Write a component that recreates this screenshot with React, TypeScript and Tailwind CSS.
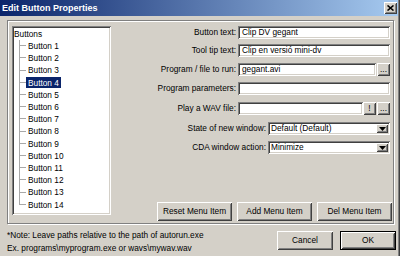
import React from "react";

const sunken =
  "bg-white p-[2px] shadow-[inset_1px_1px_0_#808080,inset_-1px_-1px_0_#ffffff,inset_2px_2px_0_#404040,inset_-2px_-2px_0_#d4d0c8]";
const raised =
  "bg-[#d4d0c8] shadow-[inset_1px_1px_0_#ffffff,inset_-1px_-1px_0_#404040,inset_2px_2px_0_#d4d0c8,inset_-2px_-2px_0_#808080]";

const items = Array.from({ length: 14 }, (_, i) => `Button ${i + 1}`);

function Field({ label, value, width = "w-[152px]", mt }: { label: string; value?: string; width?: string; mt: string }) {
  return (
    <div className={`flex items-center justify-end h-[13px] ${mt}`}>
      <span className="whitespace-nowrap mr-[2px]">{label}</span>
      <div className={`${sunken} ${width} h-[13px] flex items-center pl-[4px] whitespace-nowrap overflow-hidden`}>{value}</div>
    </div>
  );
}

function SmallButton({ text }: { text: string }) {
  return <div className={`${raised} w-[13px] h-[13px] flex items-center justify-center leading-none`}>{text}</div>;
}

function Select({ label, value, mt }: { label: string; value: string; mt: string }) {
  return (
    <div className={`flex items-center justify-end h-[13px] ${mt}`}>
      <span className="whitespace-nowrap mr-[2px]">{label}</span>
      <div className={`${sunken} w-[122px] h-[13px] flex items-stretch`}>
        <div className="flex-1 flex items-center pl-[1px] whitespace-nowrap">{value}</div>
        <div className={`${raised} w-[12px] flex items-center justify-center`}>
          <svg width="7" height="4" viewBox="0 0 7 4">
            <polygon points="0,0 7,0 3.5,4" fill="#000" />
          </svg>
        </div>
      </div>
    </div>
  );
}

export default function App() {
  return (
    <div className="w-[400px] h-[256px] overflow-hidden bg-[#d4d0c8] flex flex-col font-['Liberation_Sans',Arial,sans-serif] text-[8.3px] text-black border-r border-r-[#404040] shadow-[inset_-1px_0_0_#808080]">
      {/* title bar */}
      <div className="h-[16px] mr-[1px] flex items-center justify-between pl-[2px] pr-[1px] bg-[linear-gradient(to_right,#0a246a,#a6caf0)]">
        <span className="text-white font-bold text-[9px] leading-none">Edit Button Properties</span>
        <div className={`${raised} w-[13px] h-[12px] flex items-center justify-center`}>
          <svg width="7" height="6" viewBox="0 0 7 6">
            <path d="M0.5 0.5 L6.5 5.5 M6.5 0.5 L0.5 5.5" stroke="#000" strokeWidth="1.6" />
          </svg>
        </div>
      </div>

      {/* group box */}
      <div className="mt-[4px] ml-[7px] mr-[5px] h-[204px] border border-[#808080] shadow-[inset_1px_1px_0_#ffffff,1px_1px_0_#ffffff] flex pt-[5px] pb-[2px] pl-[4px]">
        <div className={`${sunken} w-[99px] h-[189px] pl-[2px] overflow-hidden`}>
          <div className="h-[12.2px] flex items-center">Buttons</div>
          {items.map((item, i) => (
            <div key={item} className="h-[12.2px] flex items-stretch">
              <div className="w-[5px]" />
              <div className="w-[7px] flex flex-col">
                <div className="h-1/2 border-l border-b border-[#a8a8a8]" />
                <div className={`flex-1 ${i < items.length - 1 ? "border-l border-[#a8a8a8]" : ""}`} />
              </div>
              <div className="flex items-center">
                <span className={`px-[2px] h-[11px] flex items-center whitespace-nowrap ${item === "Button 4" ? "bg-[#0a246a] text-white" : ""}`}>
                  {item}
                </span>
              </div>
            </div>
          ))}
        </div>

        <div className="flex-1 flex flex-col pr-[3px]">
          <Field label="Button text:" value="Clip DV gegant" mt="mt-0" />
          <Field label="Tool tip text:" value="Clip en versió mini-dv" mt="mt-[5px]" />
          <div className="flex items-center justify-end h-[13px] mt-[6px]">
            <span className="whitespace-nowrap mr-[2px]">Program / file to run:</span>
            <div className={`${sunken} w-[138px] h-[13px] flex items-center pl-[4px]`}>gegant.avi</div>
            <div className="ml-[1px]">
              <SmallButton text="..." />
            </div>
          </div>
          <Field label="Program parameters:" mt="mt-[6px]" />
          <div className="flex items-center justify-end h-[13px] mt-[7px]">
            <span className="whitespace-nowrap mr-[2px]">Play a WAV file:</span>
            <div className={`${sunken} w-[125px] h-[13px]`} />
            <SmallButton text="!" />
            <div className="ml-[1px]">
              <SmallButton text="..." />
            </div>
          </div>
          <Select label="State of new window:" value="Default (Default)" mt="mt-[7px]" />
          <Select label="CDA window action:" value="Minimize" mt="mt-[6px]" />

          <div className="mt-auto -mr-[2px] flex justify-end gap-[5px]">
            {["Reset Menu Item", "Add Menu Item", "Del Menu Item"].map((b) => (
              <div key={b} className={`${raised} w-[75px] h-[19px] flex items-center justify-center whitespace-nowrap`}>
                {b}
              </div>
            ))}
          </div>
        </div>
      </div>

      {/* footer */}
      <div className="flex items-start">
        <div className="ml-[7px] mt-[5px] leading-[12.5px] whitespace-nowrap">
          <div>*Note: Leave paths relative to the path of autorun.exe</div>
          <div>{"Ex. programs\\myprogram.exe or wavs\\mywav.wav"}</div>
        </div>
        <div className="ml-auto mr-[3px] mt-[7px] flex gap-[7px]">
          <div className={`${raised} w-[56px] h-[19px] flex items-center justify-center`}>Cancel</div>
          <div className="w-[56px] h-[19px] border border-black flex">
            <div className={`${raised} flex-1 flex items-center justify-center`}>OK</div>
          </div>
        </div>
      </div>
    </div>
  );
}
